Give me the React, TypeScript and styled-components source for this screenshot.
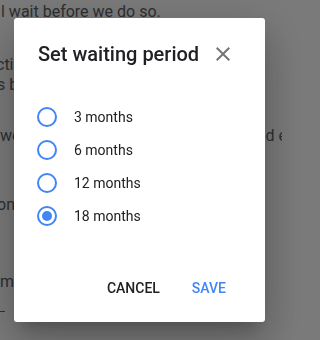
import styled, { createGlobalStyle } from "styled-components";
import { useState } from "react";

const GlobalStyle = createGlobalStyle`
    html, body {
        margin: 0;
        padding: 0;
        background: #ffffff;
        overflow: hidden;
    }
    body {
        font-family: Roboto, "Liberation Sans", Arial, sans-serif;
    }
    * {
        box-sizing: border-box;
    }
`;

const PageStyled = styled.div`
    width: 282px;
    height: 340px;
    overflow: hidden;
    color: #5f6368;
    font-size: 16px;
    line-height: 20px;
    white-space: nowrap;
`;

const LineStyled = styled.div<{ $top?: number; $shift?: number }>`
    margin-top: ${({ $top }) => $top ?? 0}px;
    margin-left: ${({ $shift }) => $shift ?? 0}px;
`;

const SplitLineStyled = styled.div<{ $top?: number }>`
    display: flex;
    justify-content: space-between;
    margin-top: ${({ $top }) => $top ?? 0}px;
`;

const RightPartStyled = styled.span`
    margin-right: -5px;
`;

const LinkDashStyled = styled.div`
    margin-top: 19px;
    width: 5px;
    height: 1px;
    background: #1a73e8;
`;

const OverlayStyled = styled.div`
    position: fixed;
    inset: 0;
    background: rgba(0, 0, 0, 0.52);
    display: flex;
    align-items: flex-start;
    justify-content: flex-start;
    padding: 18px 0 0 14px;
`;

const DialogStyled = styled.div`
    width: 251px;
    background: #ffffff;
    border-radius: 3px;
    padding: 24px 23px 16px 24px;
    box-shadow: 0 11px 15px -7px rgba(0, 0, 0, 0.2), 0 24px 38px 3px rgba(0, 0, 0, 0.14),
        0 9px 46px 8px rgba(0, 0, 0, 0.12);
`;

const HeaderStyled = styled.div`
    display: flex;
    align-items: center;
    justify-content: space-between;
    height: 24px;
    padding-right: 7px;
`;

const TitleStyled = styled.h2`
    margin: 0;
    font-size: 20px;
    line-height: 24px;
    font-weight: 500;
    color: #202124;
`;

const CloseButtonStyled = styled.button`
    width: 24px;
    height: 24px;
    padding: 0;
    border: none;
    background: none;
    cursor: pointer;
    display: flex;
    align-items: center;
    justify-content: center;
    color: #757575;
`;

const OptionListStyled = styled.div`
    margin-top: 34px;
    display: flex;
    flex-direction: column;
`;

const OptionStyled = styled.label`
    display: flex;
    align-items: center;
    height: 33px;
    gap: 17px;
    margin-left: -1px;
    cursor: pointer;
    font-size: 14px;
    color: #202124;
`;

const RadioStyled = styled.span<{ $checked: boolean }>`
    width: 20px;
    height: 20px;
    border-radius: 50%;
    border: 2px solid #4285f4;
    display: flex;
    align-items: center;
    justify-content: center;
    &::after {
        content: "";
        width: 10px;
        height: 10px;
        border-radius: 50%;
        background: #4285f4;
        display: ${({ $checked }) => ($checked ? "block" : "none")};
    }
`;

const FooterStyled = styled.div`
    margin-top: 38px;
    display: flex;
    justify-content: flex-end;
`;

const ActionButtonStyled = styled.button<{ $primary?: boolean }>`
    height: 36px;
    padding: 0 16px;
    border: none;
    background: none;
    font-family: Roboto, "Liberation Sans", Arial, sans-serif;
    font-size: 14px;
    font-weight: 500;
    text-transform: uppercase;
    color: ${({ $primary }) => ($primary ? "#4285f4" : "#202124")};
    cursor: pointer;
`;

const periods = ["3 months", "6 months", "12 months", "18 months"];

export default function App() {
    const [selected, setSelected] = useState("18 months");

    return (
        <>
            <GlobalStyle />
            <PageStyled>
                <LineStyled $top={2} $shift={1}>l wait before we do so.</LineStyled>
                <LineStyled $top={33} $shift={-4}>ctive accounts</LineStyled>
                <LineStyled $shift={-3}>s before</LineStyled>
                <SplitLineStyled $top={31}>
                    <span>we</span>
                    <RightPartStyled>d e</RightPartStyled>
                </SplitLineStyled>
                <LineStyled $top={49} $shift={-3}>on the</LineStyled>
                <LineStyled $top={57}>ma</LineStyled>
                <LinkDashStyled />
            </PageStyled>
            <OverlayStyled>
                <DialogStyled>
                    <HeaderStyled>
                        <TitleStyled>Set waiting period</TitleStyled>
                        <CloseButtonStyled aria-label="Close">
                            <svg width="24" height="24" viewBox="0 0 24 24" fill="currentColor">
                                <path d="M19 6.41L17.59 5 12 10.59 6.41 5 5 6.41 10.59 12 5 17.59 6.41 19 12 13.41 17.59 19 19 17.59 13.41 12z" />
                            </svg>
                        </CloseButtonStyled>
                    </HeaderStyled>
                    <OptionListStyled>
                        {periods.map(period => (
                            <OptionStyled key={period} onClick={() => setSelected(period)}>
                                <RadioStyled $checked={selected === period} />
                                {period}
                            </OptionStyled>
                        ))}
                    </OptionListStyled>
                    <FooterStyled>
                        <ActionButtonStyled>Cancel</ActionButtonStyled>
                        <ActionButtonStyled $primary>Save</ActionButtonStyled>
                    </FooterStyled>
                </DialogStyled>
            </OverlayStyled>
        </>
    );
}
